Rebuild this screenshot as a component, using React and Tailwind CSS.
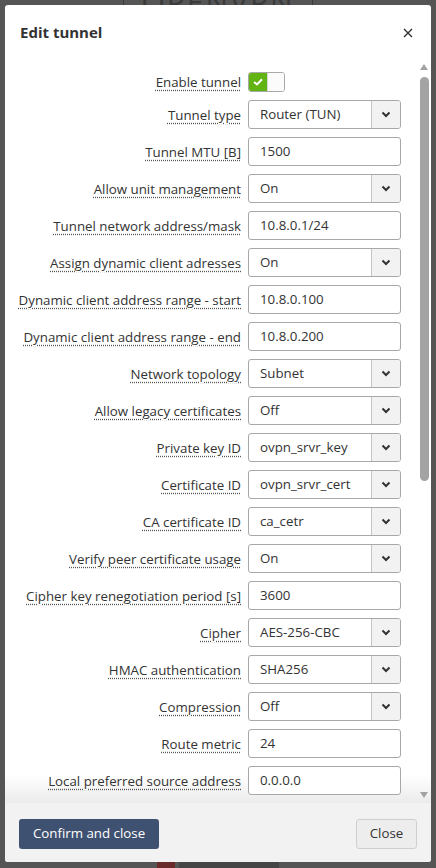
import { useState } from "react";

const fields = [
  { label: "Enable tunnel", type: "toggle" },
  { label: "Tunnel type", type: "select", value: "Router (TUN)" },
  { label: "Tunnel MTU [B]", type: "input", value: "1500" },
  { label: "Allow unit management", type: "select", value: "On" },
  { label: "Tunnel network address/mask", type: "input", value: "10.8.0.1/24" },
  { label: "Assign dynamic client adresses", type: "select", value: "On" },
  { label: "Dynamic client address range - start", type: "input", value: "10.8.0.100" },
  { label: "Dynamic client address range - end", type: "input", value: "10.8.0.200" },
  { label: "Network topology", type: "select", value: "Subnet" },
  { label: "Allow legacy certificates", type: "select", value: "Off" },
  { label: "Private key ID", type: "select", value: "ovpn_srvr_key" },
  { label: "Certificate ID", type: "select", value: "ovpn_srvr_cert" },
  { label: "CA certificate ID", type: "select", value: "ca_cetr" },
  { label: "Verify peer certificate usage", type: "select", value: "On" },
  { label: "Cipher key renegotiation period [s]", type: "input", value: "3600" },
  { label: "Cipher", type: "select", value: "AES-256-CBC" },
  { label: "HMAC authentication", type: "select", value: "SHA256" },
  { label: "Compression", type: "select", value: "Off" },
  { label: "Route metric", type: "input", value: "24" },
  { label: "Local preferred source address", type: "input", value: "0.0.0.0" },
  { label: "Push routes", type: "select", value: "Off" },
];

function Chevron() {
  return (
    <svg width="10" height="7" viewBox="0 0 10 7" fill="none">
      <path d="M1.5 1.5 L5 5 L8.5 1.5" stroke="#333" strokeWidth="2" />
    </svg>
  );
}

function Toggle({ on, onClick }) {
  return (
    <button
      onClick={onClick}
      className="flex h-[20px] w-[37px] overflow-hidden rounded-[3px] border border-[#a8a8a8] bg-white"
    >
      <span
        className={
          "flex h-full w-[18px] items-center justify-center " +
          (on ? "bg-[#62b414]" : "bg-white")
        }
      >
        {on && (
          <svg width="10" height="8" viewBox="0 0 10 8" fill="none">
            <path d="M1 4 L4 6.5 L9 1.2" stroke="#fff" strokeWidth="2" />
          </svg>
        )}
      </span>
      <span className="h-full flex-1 border-l border-[#d6d6d6] bg-[#fbfbfb]"></span>
    </button>
  );
}

function Field({ f, enabled, setEnabled }) {
  if (f.type === "toggle")
    return (
      <div className="w-[153px]">
        <Toggle on={enabled} onClick={() => setEnabled(!enabled)} />
      </div>
    );
  if (f.type === "select")
    return (
      <div className="flex h-[29px] w-[153px] overflow-hidden rounded-[3px] border border-[#a8a8a8] bg-white">
        <span className="flex flex-1 items-center pl-[11px] text-[13.3px] text-[#333]">{f.value}</span>
        <span className="flex w-[29px] items-center justify-center border-l border-[#c4c4c4] bg-[#f2f2f2]">
          <Chevron />
        </span>
      </div>
    );
  return (
    <div className="flex h-[29px] w-[153px] items-center rounded-[3px] border border-[#a8a8a8] bg-white pl-[11px] text-[13.3px] text-[#333]">
      {f.value}
    </div>
  );
}

export default function App() {
  const [enabled, setEnabled] = useState(true);

  return (
    <div
      className="relative h-[868px] w-[436px] overflow-hidden bg-[#555555]"
      style={{ fontFamily: '"Open Sans", "Noto Sans", sans-serif' }}
    >
      {/* dimmed page behind the dialog */}
      <div className="flex justify-center">
        <div className="mt-[-22px] flex h-[40px] w-[190px] items-end justify-center rounded-[8px] border border-[#3a3a3a] text-[30px] leading-none tracking-[2px] text-[#3a3a3a]">
          OPENVPN
        </div>
      </div>
      <div className="absolute bottom-0 left-0 flex h-[6px] w-full items-start justify-center gap-[4px] overflow-hidden">
        <span className="h-[20px] w-[18px] bg-[#6a2a2a]"></span>
        <span className="h-[20px] w-[100px] bg-[#454545]"></span>
      </div>

      {/* dialog */}
      <div className="absolute left-[5px] top-[5px] flex h-[857px] w-[426px] flex-col overflow-hidden rounded-[3px] bg-white">
        <div className="flex h-[55px] shrink-0 items-center justify-between pl-[15px] pr-[18px]">
          <h2 className="text-[15px] font-bold text-[#333]">Edit tunnel</h2>
          <svg width="10" height="10" viewBox="0 0 10 10" fill="none">
            <path d="M1 1 L9 9 M9 1 L1 9" stroke="#333" strokeWidth="1.4" />
          </svg>
        </div>

        <div className="relative flex min-h-0 flex-1">
          <div className="pointer-events-none absolute bottom-0 left-0 h-[28px] w-full bg-linear-to-b from-white/0 to-[#ebebeb]"></div>

          <div className="relative flex-1 overflow-hidden">
            <div className="flex flex-col gap-[8px] pr-[16px] pt-[12px]">
              {fields.map((f) => (
                <div key={f.label} className="flex items-center justify-end gap-[7px]">
                  <span className="text-right text-[13.3px] leading-[18px] text-[#333] underline decoration-dotted decoration-[#555] underline-offset-[3px]">
                    {f.label}
                  </span>
                  <Field f={f} enabled={enabled} setEnabled={setEnabled} />
                </div>
              ))}
            </div>
          </div>

          {/* scrollbar */}
          <div className="relative flex w-[14px] shrink-0 flex-col items-center pt-[4px]">
            <svg width="8" height="6" viewBox="0 0 8 6">
              <path d="M0 6 L4 0 L8 6 Z" fill="#a3a3a3" />
            </svg>
            <div className="mt-[7px] h-[404px] w-[9px] rounded-full bg-[#a3a3a3]"></div>
            <div className="flex-1"></div>
            <svg width="8" height="6" viewBox="0 0 8 6" className="mb-[5px]">
              <path d="M0 0 L8 0 L4 6 Z" fill="#a3a3a3" />
            </svg>
          </div>
        </div>

        <div className="flex h-[59px] shrink-0 items-start justify-between bg-[#f2f2f2] px-[14px] pt-[16px]">
          <button className="h-[30px] w-[140px] rounded-[3px] bg-[#3f5171] text-[13.3px] text-white">
            Confirm and close
          </button>
          <button className="h-[30px] w-[61px] rounded-[3px] border border-[#cfcfcf] bg-[#ededed] text-[13.3px] text-[#333]">
            Close
          </button>
        </div>
      </div>
    </div>
  );
}
